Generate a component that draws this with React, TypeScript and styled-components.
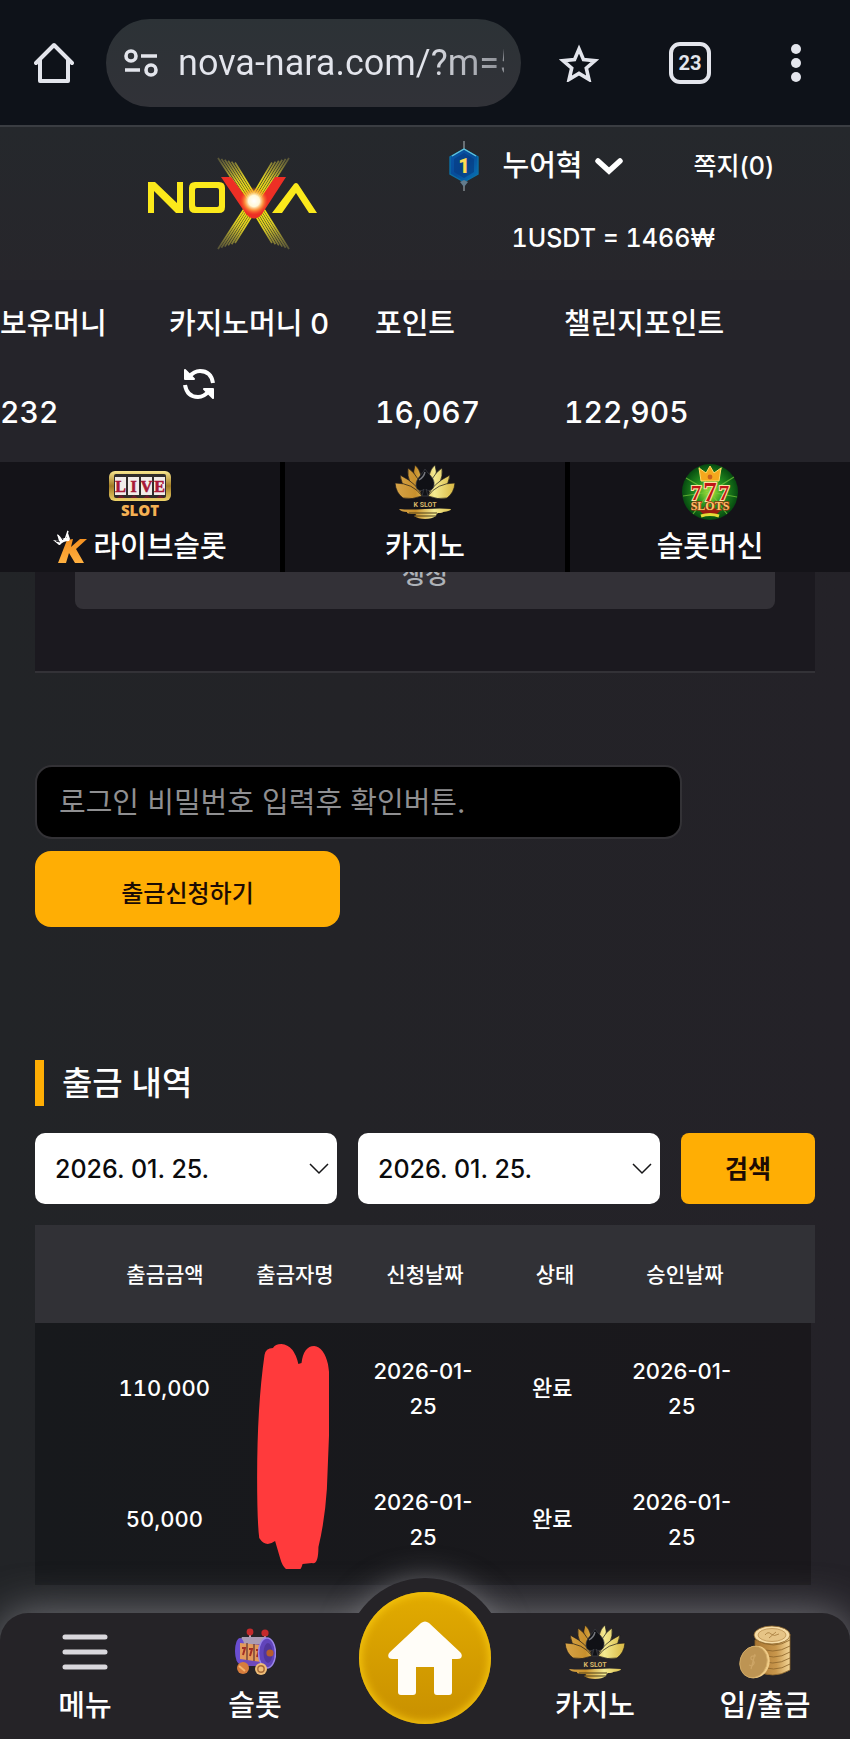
import React from "react";
import styled, { createGlobalStyle } from "styled-components";

const GlobalStyle = createGlobalStyle`
  *, *::before, *::after { box-sizing: border-box; }
  html { background: #232327; }
  body {
    margin: 0;
    color: #fff;
    font-family: Inter, "Noto Sans CJK KR", sans-serif;
    font-size: 22px;
    font-weight: 500;
  }
  button, input, select { font: inherit; }
  button { border: 0; padding: 0; background: none; color: inherit; cursor: pointer; }
  a { color: inherit; text-decoration: none; }
  svg { display: block; flex: none; }
`;

const amber = "#ffae04";

const Screen = styled.div`
  display: flex;
  flex-direction: column;
  min-height: 100vh;
  overflow-x: hidden;
  background: linear-gradient(90deg, #222427 0%, #232327 40%, #242228 100%);
`;

/* Browser bar */

const BrowserBar = styled.header`
  display: flex;
  align-items: center;
  height: 127px;
  padding: 0 48px 0 34px;
  border-bottom: 2px solid #3a3d42;
  background: #0e1219;
  color: #e3e5ec;
`;

const AddressPill = styled.label`
  display: flex;
  align-items: center;
  gap: 20px;
  flex: 1;
  min-width: 0;
  height: 88px;
  margin-left: 32px;
  padding: 0 17px 0 18px;
  border-radius: 44px;
  background: linear-gradient(#2c3236, #313238);
`;

const AddressInput = styled.input`
  flex: 1;
  min-width: 0;
  padding: 0;
  border: 0;
  outline: 0;
  background: linear-gradient(90deg, #e3e5ec 75%, #8b8e94 100%);
  background-clip: text;
  color: transparent;
  font-family: Roboto, sans-serif;
  font-size: 36px;
  font-weight: 400;
  line-height: 48px;
`;

const BrowserActions = styled.div`
  display: flex;
  align-items: center;
  flex: none;
  margin-left: 38px;
`;

const IconButton = styled.button<{ $gap?: number }>`
  display: flex;
  align-items: center;
  justify-content: center;
  flex: none;
  height: 48px;
  margin-left: ${({ $gap = 0 }) => $gap}px;
`;

const TabCount = styled.span`
  display: flex;
  align-items: center;
  justify-content: center;
  width: 42px;
  height: 42px;
  border: 4px solid #e3e5ec;
  border-radius: 11px;
  font-family: Roboto, sans-serif;
  font-size: 20px;
  font-weight: 700;
`;

/* Site header */

const SiteHeader = styled.div`
  display: grid;
  grid-template-columns: 55fr 45fr;
  height: 153px;
  background: linear-gradient(#25282c, #27262b);
`;

const LogoLink = styled.a`
  display: flex;
  align-items: center;
  padding-left: 146px;
`;

const Account = styled.div`
  display: flex;
  flex-direction: column;
  gap: 24px;
  padding-top: 14px;
  margin-left: -20px;
`;

const AccountRow = styled.div`
  display: flex;
  align-items: center;
  height: 50px;
`;

const UserButton = styled.button`
  display: flex;
  align-items: center;
  gap: 12px;
  margin-left: 23px;
  font-size: 29px;
  line-height: 40px;
`;

const Messages = styled.a`
  margin-left: 71px;
  font-size: 25px;
  line-height: 40px;
`;

const Rate = styled.p`
  margin: 0;
  padding-left: 64px;
  font-size: 25px;
  font-variant-numeric: tabular-nums;
  line-height: 46px;
`;

/* Balances */

const Balances = styled.dl`
  display: grid;
  grid-template-columns: 169fr 206fr 189fr 286fr;
  height: 182px;
  margin: 0;
  padding-top: 24px;
  background: #25242a;
`;

const BalanceItem = styled.div`
  display: flex;
  flex-direction: column;
  white-space: nowrap;
`;

const BalanceLabel = styled.dt`
  font-size: 29px;
  line-height: 40px;
`;

const BalanceValue = styled.dd`
  margin: 0;
  padding-top: 48px;
  font-size: 30px;
  font-variant-numeric: tabular-nums;
  line-height: 40px;
`;

const RefreshCell = styled.dd`
  margin: 0;
  padding: 16px 0 0 14px;
`;

/* Category tabs */

const Tabs = styled.nav`
  display: grid;
  grid-template-columns: repeat(3, 1fr);
  gap: 5px;
  height: 110px;
  background: #000;
`;

const TabLink = styled.a`
  display: flex;
  flex-direction: column;
  align-items: center;
  gap: 4px;
  padding-top: 3px;
  background: #141318;
`;

const TabLabel = styled.span`
  display: flex;
  align-items: center;
  gap: 6px;
  height: 48px;
  font-size: 29px;
  line-height: 48px;
`;

/* Page content */

const Main = styled.main`
  flex: 1;
  padding: 0 35px 28px;
`;

const FormPanel = styled.div`
  display: flex;
  align-items: flex-end;
  height: 101px;
  padding: 0 40px 62px;
  border-bottom: 2px solid #333237;
  overflow: hidden;
  background: #1b191f;
`;

const MemoButton = styled.button`
  flex: 1;
  height: 72px;
  border-radius: 8px;
  background: #333137;
  color: #aeb2b8;
  font-size: 25px;
`;

const WithdrawForm = styled.form`
  display: flex;
  flex-direction: column;
  align-items: flex-start;
  gap: 12px;
  padding-top: 92px;
`;

const PasswordInput = styled.input`
  width: 83%;
  height: 74px;
  padding: 0 22px;
  border: 2px solid #333236;
  border-radius: 17px;
  outline: 0;
  background: #000;
  color: #fff;
  font-size: 29px;
  font-weight: 400;
  &::placeholder { color: #8f8f91; opacity: 1; }
`;

const SubmitButton = styled.button`
  width: 305px;
  height: 76px;
  padding-top: 4px;
  border-radius: 16px;
  background: ${amber};
  color: #1c0b04;
  font-size: 24px;
`;

const SectionTitle = styled.h2`
  margin: 133px 0 27px;
  padding-left: 18px;
  border-left: 9px solid ${amber};
  font-size: 33px;
  font-weight: 500;
  line-height: 46px;
`;

const SearchForm = styled.form`
  display: grid;
  grid-template-columns: 302fr 302fr 134fr;
  gap: 21px;
`;

const DateField = styled.div`
  display: grid;
  align-items: center;
  > * { grid-area: 1 / 1; }
  > svg { justify-self: end; margin-right: 8px; pointer-events: none; }
`;

const DateSelect = styled.select`
  width: 100%;
  height: 71px;
  padding: 0 40px 0 20px;
  border: 0;
  border-radius: 10px;
  appearance: none;
  background: #fff;
  color: #0b0b0d;
  font-size: 25px;
`;

const SearchButton = styled.button`
  height: 71px;
  padding-bottom: 4px;
  border-radius: 8px;
  background: ${amber};
  color: #1c0b04;
  font-size: 25px;
  font-weight: 600;
`;

const HistoryTable = styled.table`
  display: block;
  margin-top: 21px;
  text-align: center;
`;

const TableHead = styled.thead`
  display: block;
  background: #313136;
`;

const TableBody = styled.tbody`
  display: block;
  margin-right: 4px;
  background: linear-gradient(90deg, #17191c, #1a181c);
`;

const Row = styled.tr<{ $height: number }>`
  display: grid;
  grid-template-columns: repeat(5, 1fr);
  align-items: center;
  height: ${({ $height }) => $height}px;
  padding: 0 calc(100% / 12);
`;

const HeadCell = styled.th`
  padding: 0 0 3px;
  font-size: 21px;
  font-weight: 500;
`;

const Cell = styled.td<{ $tabular?: boolean }>`
  display: flex;
  justify-content: center;
  padding: 0 12px;
  font-size: 22px;
  font-variant-numeric: ${({ $tabular }) => ($tabular ? "tabular-nums" : "normal")};
  line-height: 35px;
`;

/* Spans both rows of the name column */
const Redaction = styled.svg`
  position: relative;
  width: 74px;
  height: 225px;
  margin: 21px 4px -115px 0;
`;

/* Bottom navigation */

const BottomNav = styled.nav`
  position: sticky;
  bottom: 0;
  display: grid;
  grid-template-columns: repeat(5, 1fr);
  height: 126px;
  border-radius: 28px 28px 0 0;
  background: #252327;
  box-shadow: 0 0 44px #77777c;
`;

const NavLink = styled.a`
  display: flex;
  flex-direction: column;
  align-items: center;
  justify-content: space-between;
  padding: 12px 0 13px;
  font-size: 29px;
  line-height: 40px;
`;

const NavIcon = styled.span`
  display: flex;
  align-items: center;
  height: 54px;
`;

const HomeLink = styled.a`
  position: relative;
  justify-self: center;
  display: flex;
  align-items: center;
  justify-content: center;
  width: 160px;
  height: 160px;
  margin-top: -35px;

  &::before {
    content: "";
    position: absolute;
    inset: 0;
    border-radius: 50%;
    background: #252327;
    box-shadow: 0 0 32px -4px #77777c;
    clip-path: inset(-50px -50px 125px -50px);
  }
`;

const HomeDisc = styled.span`
  position: relative;
  display: flex;
  align-items: center;
  justify-content: center;
  width: 132px;
  height: 132px;
  border-radius: 50%;
  background: linear-gradient(#e2ab00, #c89000);
  box-shadow: inset 0 0 8px 2px #f7c70e;
`;

const NovaLogo = () => {
  const rays = [0, 1, 2, 3, 4, 5];
  return (
    <svg width="174" height="96" viewBox="0 0 174 96" role="img" aria-label="NOVA">
      <defs>
        <radialGradient id="ray" gradientUnits="userSpaceOnUse" cx="108" cy="47" r="56">
          <stop offset="0" stopColor="#fff000" />
          <stop offset=".5" stopColor="#d9ca25" />
          <stop offset="1" stopColor="#8d8644" stopOpacity=".5" />
        </radialGradient>
        <radialGradient id="flare">
          <stop offset="0" stopColor="#fff" />
          <stop offset=".4" stopColor="#fff8d8" />
          <stop offset=".65" stopColor="#ffb04a" stopOpacity=".8" />
          <stop offset="1" stopColor="#ff5a20" stopOpacity="0" />
        </radialGradient>
      </defs>
      <g stroke="url(#ray)" strokeWidth="1.7" fill="none">
        {rays.map((i) => (
          <g key={i}>
            <path d={`M${72 + i * 3.4} ${2 + i * 0.9}L${102 + i * 2.4} 47L${126 + i * 3.4} ${87 + i * 1.2}`} />
            <path d={`M${143 - i * 3.4} ${2 + i * 0.9}L${114 - i * 2.4} 47L${89 - i * 3.4} ${87 + i * 1.2}`} />
          </g>
        ))}
      </g>
      <path d="M2 57V26h7l22 21V26h6v31h-7L8 35v22z" fill="#fbe91b" />
      <path d="M49 26h24q6 0 6 6v19q0 6-6 6H49q-6 0-6-6V32q0-6 6-6zm2 6q-2 0-2 2v15q0 2 2 2h20q2 0 2-2V34q0-2-2-2z" fill="#fbe91b" fillRule="evenodd" />
      <path d="M126 57l22-29q2-2 4 0l19 29h-8l-13-20-14 20z" fill="#fbe91b" />
      <path d="M75 21h10l23 31 21-31h11l-24 37q-8 9-16 0z" fill="#ed2f25" />
      <circle cx="108" cy="45" r="14" fill="url(#flare)" />
    </svg>
  );
};

const RankBadge = () => (
  <svg width="32" height="50" viewBox="0 0 32 50" role="img" aria-label="레벨 1">
    <defs>
      <linearGradient id="rank" x1="0" y1="0" x2="1" y2="1">
        <stop offset="0" stopColor="#0a55a8" />
        <stop offset=".5" stopColor="#074c99" />
        <stop offset="1" stopColor="#0876b8" />
      </linearGradient>
    </defs>
    <path d="M16 0v50" stroke="#7b8288" strokeWidth="1.6" />
    <path d="M16 8l14 8v17l-14 8-14-8V16z" fill="url(#rank)" stroke="#0b6fa5" strokeWidth="1.4" />
    <path d="M16 12l10 6v13l-10 6-10-6V18z" fill="#073b80" opacity=".6" />
    <path d="M4 15l12-7 12 7" fill="none" stroke="#62c4dd" strokeWidth="1.4" />
    <path d="M12 41l4-2 4 2-4 5z" fill="#637b8c" />
    <text x="16" y="32" textAnchor="middle" fontFamily="Roboto" fontWeight="900" fontSize="20" fill="#ffdc52">1</text>
  </svg>
);

const LiveSlotIcon = () => (
  <svg width="64" height="54" viewBox="0 0 64 54" aria-hidden="true">
    <defs>
      <linearGradient id="goldBar" x2="0" y2="1">
        <stop offset="0" stopColor="#f9e78f" />
        <stop offset=".5" stopColor="#a07a24" />
        <stop offset="1" stopColor="#efd36a" />
      </linearGradient>
    </defs>
    <rect x="1" y="6" width="62" height="30" rx="6" fill="url(#goldBar)" />
    <rect x="6" y="9" width="52" height="24" rx="2" fill="#302c2a" />
    {["L", "I", "V", "E"].map((c, i) => (
      <g key={c}>
        <rect x={7 + i * 13} y="12" width="11" height="18" fill="#f1ece9" />
        <text x={12.5 + i * 13} y="27" textAnchor="middle" fontFamily="Liberation Serif" fontWeight="700" fontSize="16" fill="#a81837" stroke="#a81837" strokeWidth=".6">{c}</text>
      </g>
    ))}
    <path d="M9 33l4-3 4 3zM22 33l4-3 4 3zM35 33l4-3 4 3zM48 33l4-3 4 3z" fill="#6a1b29" />
    <text x="32" y="51" textAnchor="middle" fontFamily="Open Sans" fontWeight="800" fontSize="15" fill="#f5b153">SLOT</text>
  </svg>
);

const CrownK = () => (
  <svg width="34" height="36" viewBox="0 0 34 36" aria-hidden="true">
    <defs>
      <linearGradient id="kfill" x2="0" y2="1">
        <stop offset="0" stopColor="#f59120" />
        <stop offset="1" stopColor="#ffb040" />
      </linearGradient>
    </defs>
    <path d="M14 11l6-1-2 8 9-8h7L23 20l8 14h-9l-6-10-3 10H5z" fill="url(#kfill)" />
    <path d="M6 16L0 11l6 1-2-7 6 5 1-1 3 0 0-8 3 9-1 2q-6 0-9 4z" fill="#fff" />
    <path d="M9 13L5 6M12 11l3-9" stroke="#fff" strokeWidth="1.5" />
    <path d="M3 12l4 1M8 8l2 3" stroke="#141318" strokeWidth="1" />
  </svg>
);

const LotusIcon = ({ id }: { id: string }) => (
  <svg width="62" height="56" viewBox="0 0 62 56" aria-hidden="true">
    <defs>
      <linearGradient id={id} gradientUnits="userSpaceOnUse" x1="0" y1="0" x2="62" y2="0">
        <stop offset="0" stopColor="#d8a54a" />
        <stop offset=".35" stopColor="#c8902c" />
        <stop offset=".65" stopColor="#f4eb91" />
        <stop offset="1" stopColor="#d6b43d" />
      </linearGradient>
    </defs>
    <g fill={`url(#${id})`} stroke="#1b181a" strokeWidth=".7">
      <path d="M21 1q9 8 4 21-8-8-4-21zM41 1q-9 8-4 21 8-8 4-21z" />
      <path d="M14 4q13 9 13 25Q12 21 14 4zM48 4Q35 13 35 29 50 21 48 4z" />
      <path d="M6 11q18 9 22 21Q8 28 6 11zM56 11q-18 9-22 21 20-4 22-21z" />
      <path d="M1 19q18 0 27 13Q18 36 9 34 2 29 1 19zM61 19q-18 0-27 13 10 4 19 2 7-5 8-15z" />
    </g>
    <path d="M31 5c4 6 10 9 9 16s-7 6-8 4l2 7h-6l2-7c-2 3-8 2-8-4 0-7 6-10 9-16z" fill="#101116" stroke="#3d4048" strokeWidth=".7" />
    <path d="M25 16q5-3 6-8" stroke="#9fa2aa" strokeWidth="1.4" fill="none" opacity=".7" />
    <text x="31" y="43" textAnchor="middle" fontFamily="Roboto" fontWeight="700" fontSize="7" fill="#d9b869">K SLOT</text>
    <path d="M5 45q10 1 26 0t26 0q0 2-8 3 0 1-5 1-2 1-2 3-4 3-11 3t-11-3q4-1 1-2-9 0-8-2-6 0-8-3z" fill={`url(#${id})`} />
    <path d="M15 49h28M20 52h22" stroke="#4d3f18" />
  </svg>
);

const SevensIcon = () => (
  <svg width="58" height="58" viewBox="0 0 58 58" aria-hidden="true">
    <defs>
      <radialGradient id="green">
        <stop offset="0" stopColor="#b4e83a" />
        <stop offset=".5" stopColor="#259420" />
        <stop offset="1" stopColor="#064a10" />
      </radialGradient>
    </defs>
    <circle cx="29" cy="29" r="28" fill="url(#green)" />
    <path d="M29 29L5 15M29 29L2 33M29 29L12 51M29 29L53 14M29 29L56 34M29 29L46 51M29 29L18 4M29 29L41 4" stroke="#79cb3c" strokeWidth="1.2" opacity=".7" />
    <path d="M20 18L18 5l7 5 4-7 4 7 7-5-2 13z" fill="#f5a81d" stroke="#ffdc6b" />
    <circle cx="29" cy="14" r="2.4" fill="#c9601c" />
    <path d="M18 47l11-3 11 3-4 4H22z" fill="#9b1b10" />
    <path d="M20 53q9-3 18 0" stroke="#e5dc35" strokeWidth="3" fill="none" />
    <g fontFamily="Liberation Serif" fontWeight="700" textAnchor="middle" paintOrder="stroke" stroke="#ffe0a2" strokeWidth="2.2" fill="#c11616">
      <text x="15" y="37" fontSize="21">7</text>
      <text x="43" y="37" fontSize="21">7</text>
      <text x="29" y="38" fontSize="27">7</text>
    </g>
    <text x="29" y="47" textAnchor="middle" fontFamily="Liberation Serif" fontWeight="700" fontSize="12" fill="#ffc36a" stroke="#8f3212" strokeWidth="1.4" paintOrder="stroke">SLOTS</text>
  </svg>
);

const SlotMachineIcon = () => (
  <svg width="42" height="48" viewBox="0 0 42 48" aria-hidden="true">
    <path d="M16 6v8M31 7v8" stroke="#b9a1b5" strokeWidth="2" />
    <circle cx="16" cy="4" r="3.4" fill="#c42a2c" />
    <circle cx="31" cy="5" r="3.6" fill="#c42a2c" />
    <path d="M8 9h24l3 29H6z" fill="#6e4abb" />
    <path d="M8 9h24l-4 7H5z" fill="#a99bb4" />
    <ellipse cx="6" cy="23" rx="5" ry="13" fill="#6b4ed0" />
    <path d="M6 15l22 2v17L6 31z" fill="#e39a5a" />
    <path d="M13 15v17M20 16v17" stroke="#70403a" strokeWidth="1.4" />
    <path d="M8 20h3l-2 7M15 21h3l-2 7M22 22h3l-2 7" stroke="#a42f26" strokeWidth="2" fill="none" />
    <ellipse cx="33" cy="25" rx="8.500" ry="15" fill="#6144bb" stroke="#9a85ea" strokeWidth="1.5" />
    <ellipse cx="34" cy="25" rx="4.500" ry="10" fill="#51369c" />
    <circle cx="36" cy="25" r="3.6" fill="#b75d2c" />
    <circle cx="9" cy="40" r="6" fill="#d77d3d" />
    <circle cx="27" cy="41" r="6" fill="#efbd78" />
    <circle cx="27" cy="41" r="3.2" fill="none" stroke="#a96c38" strokeWidth="1.4" />
    <path d="M5 38l6 5" stroke="#f4b56e" strokeWidth="2" />
  </svg>
);

const CoinsIcon = () => (
  <svg width="54" height="54" viewBox="0 0 54 54" aria-hidden="true">
    <defs>
      <linearGradient id="coinEdge">
        <stop offset="0" stopColor="#a97632" />
        <stop offset=".6" stopColor="#c9974c" />
        <stop offset="1" stopColor="#f3d596" />
      </linearGradient>
    </defs>
    <g stroke="#8a6329" strokeWidth=".8">
      {[44, 38, 32, 26, 20, 14].map((y, i) => (
        <path key={y} d={`M${17 + (i % 2)} ${y - 5}v6q18 10 ${35 - (i % 2)} 0v-6z`} fill="url(#coinEdge)" />
      ))}
      <ellipse cx="34" cy="10" rx="18" ry="9" fill="#f6dca6" />
      <ellipse cx="34" cy="10" rx="14" ry="6.5" fill="#e6c486" stroke="#bb9150" />
      <path d="M27 10q3-4 6-1t8 0M31 13l7-6" fill="none" stroke="#a67b3c" />
      <ellipse cx="17" cy="37" rx="14.500" ry="16.500" transform="rotate(18 17 37)" fill="#f0cc88" stroke="none" />
      <ellipse cx="15.500" cy="37" rx="13.500" ry="16" transform="rotate(18 15.500 37)" fill="#bd9453" stroke="#d5ae69" />
      <path d="M18 31q-6-1-5 3 6 3 1 7l-3-1M17 29l-4 15" fill="none" stroke="#cda566" strokeWidth="1.2" />
    </g>
  </svg>
);

const categories = [
  { label: "라이브슬롯", icon: <LiveSlotIcon />, mark: <CrownK /> },
  { label: "카지노", icon: <LotusIcon id="lotusTab" /> },
  { label: "슬롯머신", icon: <SevensIcon /> },
];

const history = [
  { amount: "110,000", requested: "2026-01-25", status: "완료", approved: "2026-01-25" },
  { amount: "50,000", requested: "2026-01-25", status: "완료", approved: "2026-01-25" },
];

const DatePicker = ({ label }: { label: string }) => (
  <DateField>
    <DateSelect aria-label={label} defaultValue="2026-01-25">
      <option value="2026-01-25">2026. 01. 25.</option>
    </DateSelect>
    <svg width="20" height="12" viewBox="0 0 20 12" fill="none" stroke="#161618" strokeWidth="1.5" aria-hidden="true">
      <path d="M1 1l9 9 9-9" />
    </svg>
  </DateField>
);

export default function App() {
  const stop = (e: React.FormEvent) => e.preventDefault();
  return (
    <Screen>
      <GlobalStyle />
      <BrowserBar>
        <IconButton aria-label="홈">
          <svg width="40" height="42" viewBox="0 0 40 42" fill="none" stroke="currentColor" strokeWidth="4" strokeLinejoin="round" strokeLinecap="round">
            <path d="M2 21L20 3l18 18M6 18v21h28V18" />
          </svg>
        </IconButton>
        <AddressPill>
          <svg width="34" height="28" viewBox="0 0 34 28" fill="none" stroke="currentColor" strokeWidth="3.6" aria-hidden="true">
            <circle cx="7" cy="7" r="5" />
            <path d="M17 7h16M1 21h15" />
            <circle cx="27" cy="21" r="5" />
          </svg>
          <AddressInput aria-label="주소" defaultValue="nova-nara.com/?m=5" />
        </AddressPill>
        <BrowserActions>
          <IconButton aria-label="북마크">
            <svg width="40" height="38" viewBox="0 0 40 38" fill="none" stroke="currentColor" strokeWidth="3.6">
              <path d="M20 5l4.500 10.600 11.500 1-8.700 7.600 2.600 11.200L20 29.400l-9.900 6 2.600-11.200L4 16.600l11.500-1z" />
            </svg>
          </IconButton>
          <IconButton aria-label="탭" $gap={70}>
            <TabCount>23</TabCount>
          </IconButton>
          <IconButton aria-label="더보기" $gap={79}>
            <svg width="12" height="38" viewBox="0 0 12 38" fill="currentColor">
              <circle cx="6" cy="5" r="5" />
              <circle cx="6" cy="19" r="5" />
              <circle cx="6" cy="33" r="5" />
            </svg>
          </IconButton>
        </BrowserActions>
      </BrowserBar>

      <SiteHeader>
        <LogoLink href="#"><NovaLogo /></LogoLink>
        <Account>
          <AccountRow>
            <RankBadge />
            <UserButton>
              누어혁
              <svg width="28" height="18" viewBox="0 0 28 18" fill="none" stroke="currentColor" strokeWidth="5.500" strokeLinecap="round" aria-hidden="true">
                <path d="M3 4l11 10L25 4" />
              </svg>
            </UserButton>
            <Messages href="#">쪽지(0)</Messages>
          </AccountRow>
          <Rate>1USDT = 1466₩</Rate>
        </Account>
      </SiteHeader>

      <Balances>
        <BalanceItem>
          <BalanceLabel>보유머니</BalanceLabel>
          <BalanceValue>232</BalanceValue>
        </BalanceItem>
        <BalanceItem>
          <BalanceLabel>카지노머니 0</BalanceLabel>
          <RefreshCell>
            <IconButton aria-label="새로고침">
              <svg width="32" height="32" viewBox="0 0 32 32" fill="none" stroke="currentColor" strokeWidth="4">
                <path d="M6 9q5-6 11-6 11 0 13 12M26 23q-5 6-11 6Q4 29 2 17" />
                <path d="M2 2v9h9zM30 30v-9h-9z" fill="currentColor" strokeWidth="2" strokeLinejoin="round" />
              </svg>
            </IconButton>
          </RefreshCell>
        </BalanceItem>
        <BalanceItem>
          <BalanceLabel>포인트</BalanceLabel>
          <BalanceValue>16,067</BalanceValue>
        </BalanceItem>
        <BalanceItem>
          <BalanceLabel>챌린지포인트</BalanceLabel>
          <BalanceValue>122,905</BalanceValue>
        </BalanceItem>
      </Balances>

      <Tabs>
        {categories.map(({ label, icon, mark }) => (
          <TabLink href="#" key={label}>
            <NavIcon>{icon}</NavIcon>
            <TabLabel>{mark}{label}</TabLabel>
          </TabLink>
        ))}
      </Tabs>

      <Main>
        <FormPanel>
          <MemoButton>생성</MemoButton>
        </FormPanel>

        <WithdrawForm onSubmit={stop}>
          <PasswordInput type="password" aria-label="로그인 비밀번호" placeholder="로그인 비밀번호 입력후 확인버튼." />
          <SubmitButton>출금신청하기</SubmitButton>
        </WithdrawForm>

        <SectionTitle>출금 내역</SectionTitle>
        <SearchForm onSubmit={stop}>
          <DatePicker label="시작일" />
          <DatePicker label="종료일" />
          <SearchButton>검색</SearchButton>
        </SearchForm>

        <HistoryTable>
          <TableHead>
            <Row $height={98}>
              {["출금금액", "출금자명", "신청날짜", "상태", "승인날짜"].map((h) => (
                <HeadCell key={h} scope="col">{h}</HeadCell>
              ))}
            </Row>
          </TableHead>
          <TableBody>
            {history.map((row, i) => (
              <Row key={i} $height={131}>
                <Cell $tabular>{row.amount}</Cell>
                <Cell>
                  {i === 0 && (
                    <Redaction viewBox="1 0 70 225" preserveAspectRatio="none" aria-hidden="true">
                      <path
                        d="M10 11q1-7 8-7 2-4 8-4 12 1 16 20l3-1q2-17 12-17 9 1 13 18 3 20 2 45l-3 80q-2 32-8 58 0 18-6 16l-9 1q-2 9-9 8-9-1-12-13l-5-18q-9 7-15-3-2-17-2-60 0-72 7-123z"
                        fill="#ff3a3c"
                      />
                    </Redaction>
                  )}
                </Cell>
                <Cell>{row.requested}</Cell>
                <Cell>{row.status}</Cell>
                <Cell>{row.approved}</Cell>
              </Row>
            ))}
          </TableBody>
        </HistoryTable>
      </Main>

      <BottomNav>
        <NavLink href="#">
          <NavIcon>
            <svg width="46" height="36" viewBox="0 0 46 36" stroke="#d9d7dc" strokeWidth="5" strokeLinecap="round" aria-hidden="true">
              <path d="M3 3h40M3 18h40M3 33h40" />
            </svg>
          </NavIcon>
          메뉴
        </NavLink>
        <NavLink href="#">
          <NavIcon><SlotMachineIcon /></NavIcon>
          슬롯
        </NavLink>
        <HomeLink href="#" aria-label="홈">
          <HomeDisc>
            <svg width="74" height="74" viewBox="0 0 74 74" fill="#fffdf8" aria-hidden="true">
              <path d="M33 2q4-3 8 0l31 29q3 3 1 6-1 1-4 1h-5v33q0 3-3 3H49q-3 0-3-3V46H28v25q0 3-3 3H13q-3 0-3-3V38H5q-3 0-4-1-2-3 1-6z" />
            </svg>
          </HomeDisc>
        </HomeLink>
        <NavLink href="#">
          <NavIcon><LotusIcon id="lotusNav" /></NavIcon>
          카지노
        </NavLink>
        <NavLink href="#">
          <NavIcon><CoinsIcon /></NavIcon>
          입/출금
        </NavLink>
      </BottomNav>
    </Screen>
  );
}
